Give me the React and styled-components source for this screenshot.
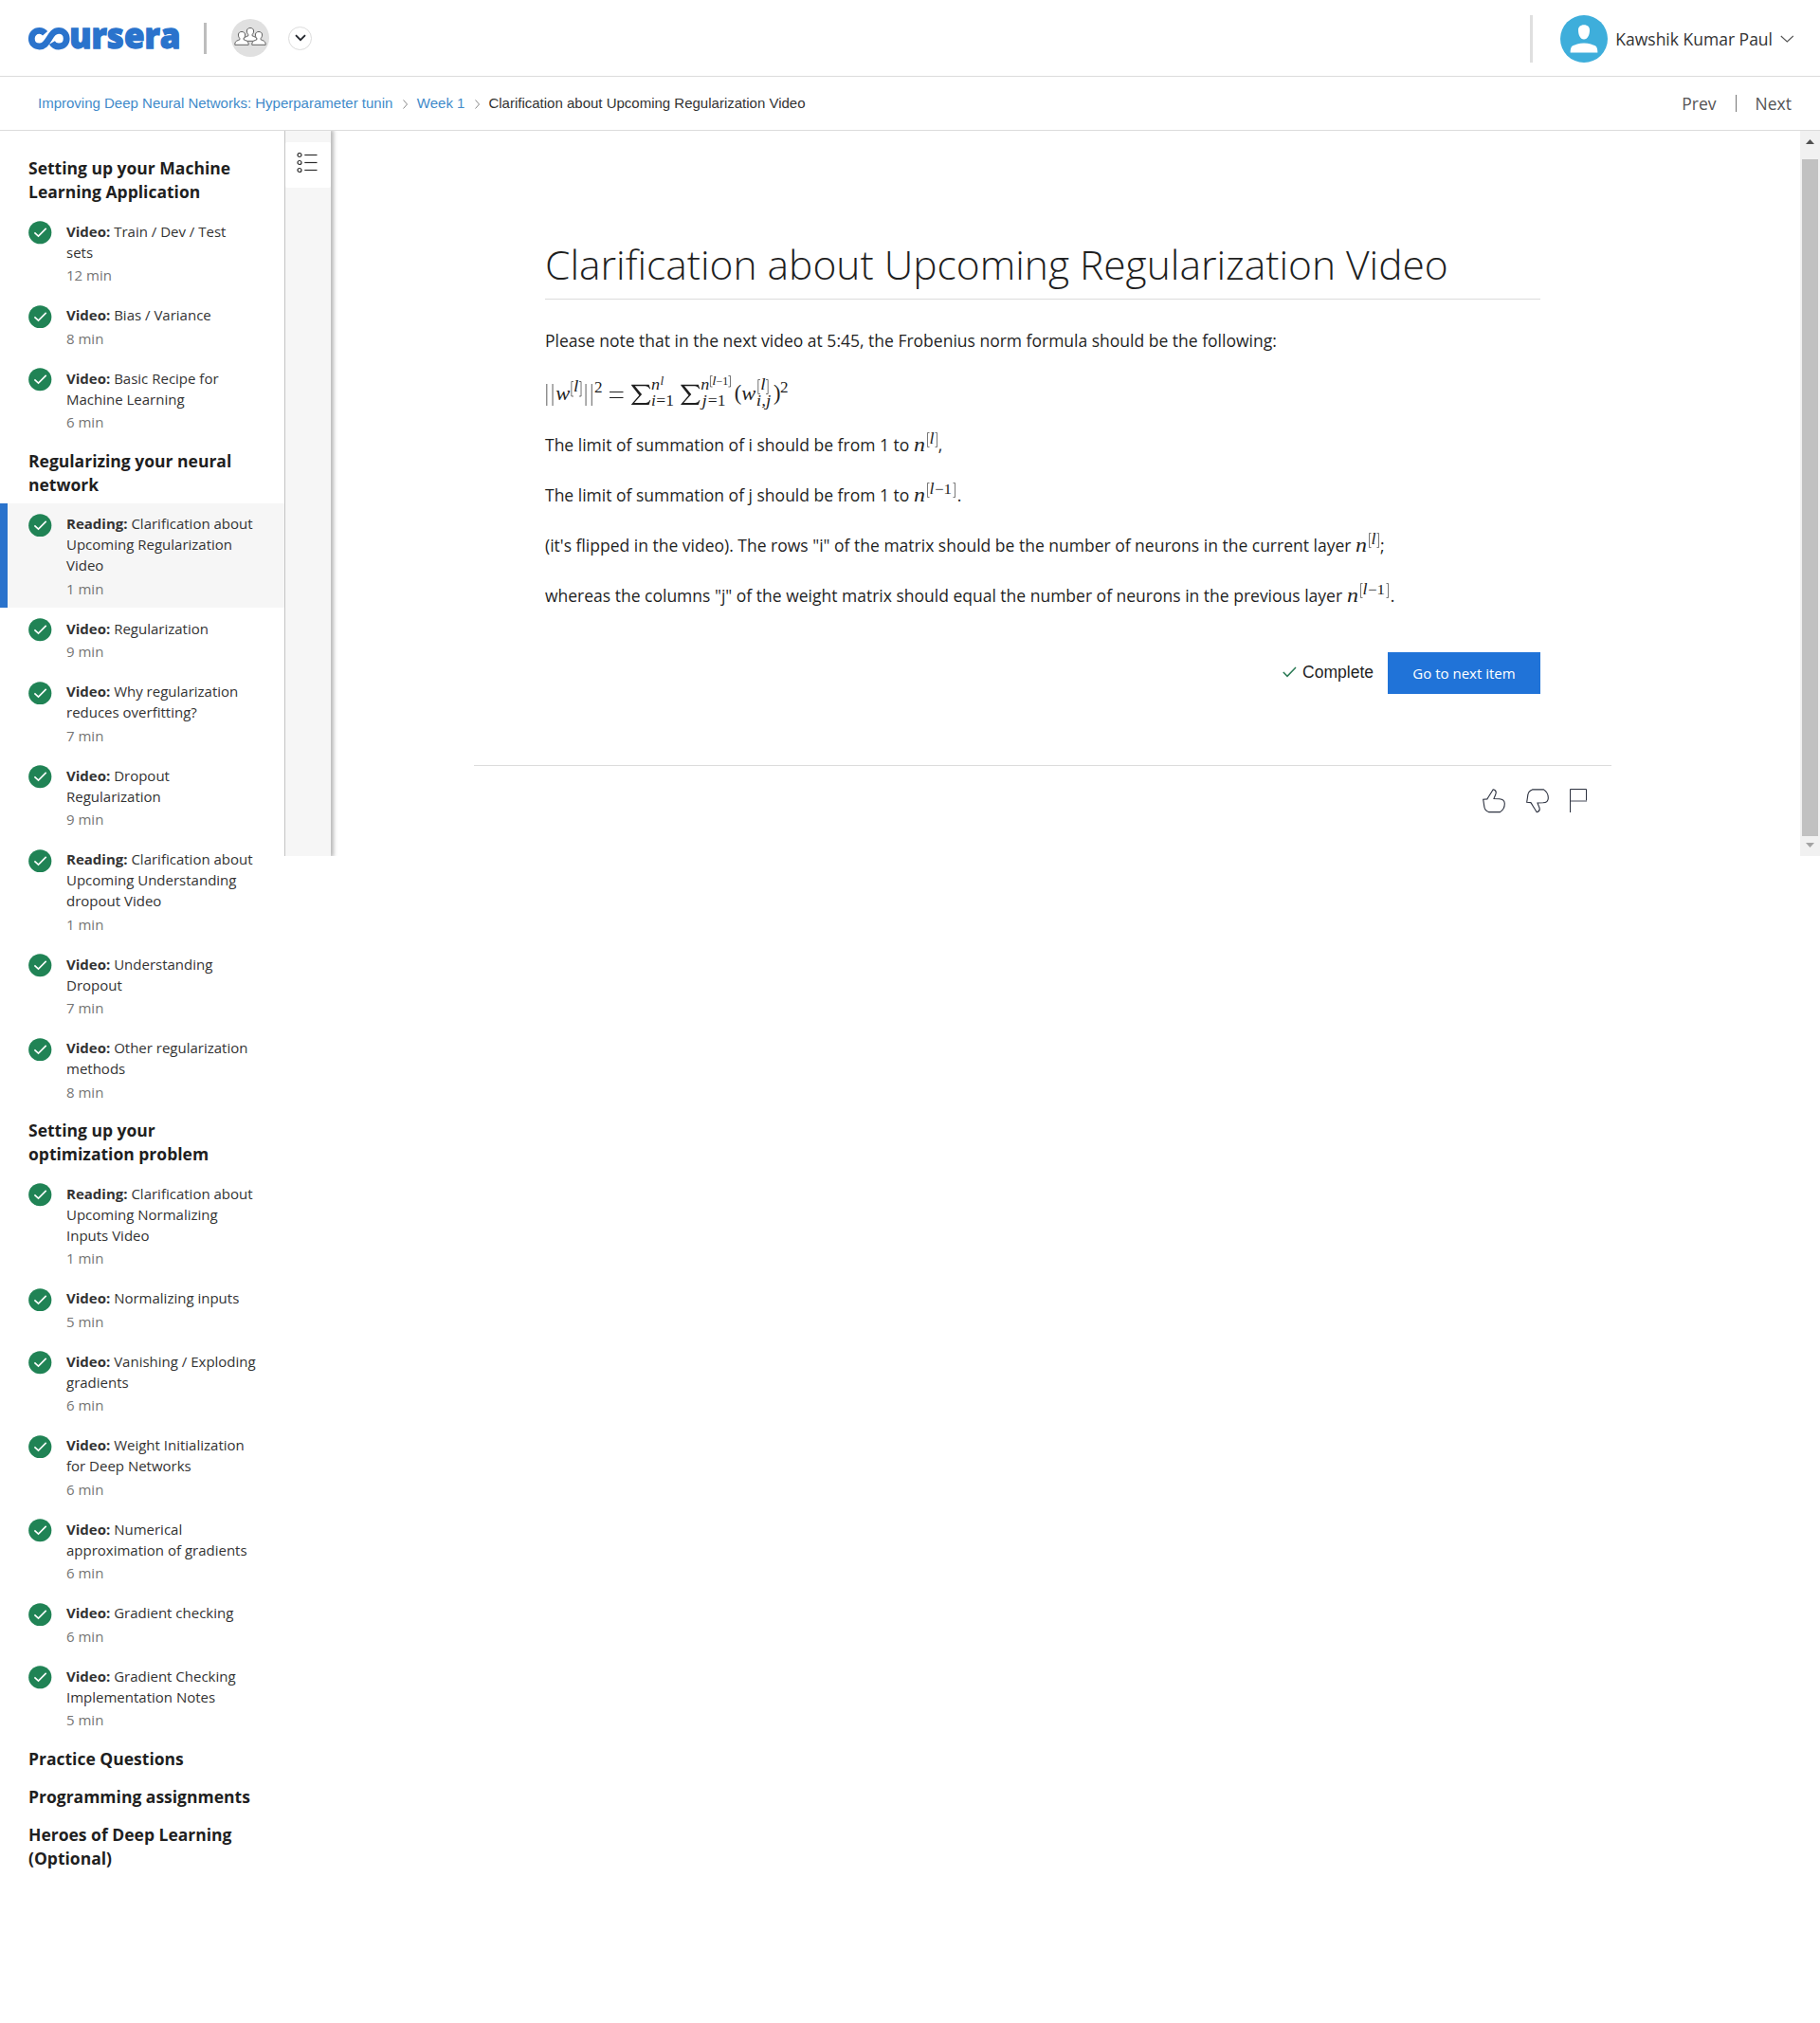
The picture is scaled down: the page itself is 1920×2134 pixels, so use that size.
import React from "react";
import styled, { createGlobalStyle } from "styled-components";

const GlobalStyle = createGlobalStyle`
  *, *::before, *::after { box-sizing: border-box; }
  body {
    margin: 0;
    background: #fff;
    color: #1f1f1f;
    font-family: "Open Sans", "Noto Sans", sans-serif;
    font-size: 17.5px;
  }
`;

const sections = [
  {
    title: "Setting up your Machine\nLearning Application",
    items: [
      { kind: "Video", name: "Train / Dev / Test\nsets", time: 12 },
      { kind: "Video", name: "Bias / Variance", time: 8 },
      { kind: "Video", name: "Basic Recipe for\nMachine Learning", time: 6 },
    ],
  },
  {
    title: "Regularizing your neural\nnetwork",
    items: [
      { kind: "Reading", name: "Clarification about\nUpcoming Regularization\nVideo", time: 1, active: true },
      { kind: "Video", name: "Regularization", time: 9 },
      { kind: "Video", name: "Why regularization\nreduces overfitting?", time: 7 },
      { kind: "Video", name: "Dropout\nRegularization", time: 9 },
      { kind: "Reading", name: "Clarification about\nUpcoming Understanding\ndropout Video", time: 1 },
      { kind: "Video", name: "Understanding\nDropout", time: 7 },
      { kind: "Video", name: "Other regularization\nmethods", time: 8 },
    ],
  },
  {
    title: "Setting up your\noptimization problem",
    items: [
      { kind: "Reading", name: "Clarification about\nUpcoming Normalizing\nInputs Video", time: 1 },
      { kind: "Video", name: "Normalizing inputs", time: 5 },
      { kind: "Video", name: "Vanishing / Exploding\ngradients", time: 6 },
      { kind: "Video", name: "Weight Initialization\nfor Deep Networks", time: 6 },
      { kind: "Video", name: "Numerical\napproximation of gradients", time: 6 },
      { kind: "Video", name: "Gradient checking", time: 6 },
      { kind: "Video", name: "Gradient Checking\nImplementation Notes", time: 5 },
    ],
  },
  { title: "Practice Questions", items: [] },
  { title: "Programming assignments", items: [] },
  { title: "Heroes of Deep Learning\n(Optional)", items: [] },
];

/* ---------- header ---------- */

const Header = styled.header`
  display: flex;
  align-items: center;
  height: 81px;
  padding: 0 27px 0 30px;
  border-bottom: 1px solid #dcdcdc;
`;

const Divider = styled.span`
  width: 3px;
  height: ${(p) => p.$height}px;
  background: ${(p) => p.$color};
`;

const GroupBadge = styled.span`
  display: flex;
  width: 40px;
  height: 40px;
  margin: 0 20px 0 26px;
  border-radius: 50%;
  background: #e0e0e0;
`;

const RoundButton = styled.button`
  display: flex;
  align-items: center;
  justify-content: center;
  width: 25px;
  height: 25px;
  padding: 0;
  border: 1px solid #dcdcdc;
  border-radius: 50%;
  background: #fff;
`;

const Account = styled.div`
  display: flex;
  align-items: center;
  margin: 2px 0 0 auto;
`;

const UserName = styled.span`
  margin: 0 8px 0 8px;
  color: #333;
  line-height: 24px;
`;

const LogoSvg = styled.svg`
  display: block;
  margin-right: 25px;
  overflow: visible;
  font-family: "Open Sans", sans-serif;
  font-size: 37px;
  font-weight: 800;
`;

const Icon = styled.svg`
  display: block;
  flex: none;
`;

const Avatar = styled(Icon)`
  margin-left: 29px;
`;

/* ---------- breadcrumb bar ---------- */

const SubHeader = styled.div`
  display: flex;
  align-items: center;
  justify-content: space-between;
  height: 57px;
  padding: 0 30px 0 40px;
  border-bottom: 1px solid #dcdcdc;
`;

const Crumbs = styled.nav`
  display: flex;
  align-items: center;
  color: #333;
  font: 15px/20px "Liberation Sans", Arial, sans-serif;
`;

const Crumb = styled.a`
  color: #428bca;
`;

const CrumbArrow = styled(Icon)`
  margin: 2px ${(p) => p.$right}px 0 ${(p) => p.$left}px;
`;

const Pager = styled.div`
  display: flex;
  align-items: center;
  color: #555;
  line-height: 24px;
`;

const PagerBar = styled.span`
  width: 1px;
  height: 18px;
  margin: 0 20px 0 20px;
  background: #777;
`;

/* ---------- page body ---------- */

const Body = styled.div`
  display: flex;
  align-items: flex-start;
`;

const Sidebar = styled.aside`
  width: 300px;
  padding-top: 26.5px;
`;

const Section = styled.section`
  padding: 0.625px 0 7.5px;
`;

const SectionTitle = styled.h2`
  margin: 0 0 6.9375px 30px;
  font-size: 17.5px;
  font-weight: 700;
  line-height: 25px;
  white-space: pre;
`;

const Item = styled.a`
  display: flex;
  padding: 11px 0 9.5px ${(p) => (p.$active ? 22 : 30)}px;
  border-left: ${(p) => (p.$active ? "8px solid #2a73cc" : "0")};
  background: ${(p) => (p.$active ? "#f6f6f6" : "transparent")};
`;

const ItemText = styled.div`
  margin: -0.375px 0 0 15.5px;
  color: #333;
  font-size: 15px;
  line-height: 22px;
`;

const Line = styled.div`
  white-space: nowrap;
`;

const Duration = styled.div`
  padding-top: 2.375px;
  color: #757575;
`;

const Panel = styled.div`
  display: flex;
  flex: 1;
  height: 765px;
  overflow: hidden;
`;

const Rail = styled.div`
  width: 49px;
  padding-top: 12px;
  border-left: 1px solid #c4c4c4;
  background: #f6f6f6;
  box-shadow: 2px 0 4px 1px rgba(0, 0, 0, 0.28);
`;

const RailTab = styled.div`
  display: flex;
  align-items: center;
  justify-content: center;
  height: 48px;
  padding: 0 3px 5px 0;
  border-radius: 2px;
  background: #fff;
`;

const Main = styled.main`
  flex: 1;
  padding: 0 199px 0 151px;
`;

const Article = styled.article`
  padding: 109px 75px 0 75px;
`;

const Title = styled.h1`
  height: 69px;
  margin: 0 0 31px;
  padding-top: 2px;
  border-bottom: 1px solid #dcdcdc;
  font-size: 42.5px;
  font-weight: 300;
  line-height: 60px;
`;

const Paragraph = styled.p`
  height: 25px;
  margin: 0 0 ${(p) => p.$gap ?? 28}px;
  line-height: 25px;
  white-space: nowrap;
`;

const MathSvg = styled.svg`
  display: block;
  overflow: visible;
  fill: #1f1f1f;
  font-family: "Liberation Serif", serif;
`;

const InlineMath = styled(MathSvg)`
  display: inline-block;
  height: 22px;
  vertical-align: -2px;
`;

const Formula = styled.div`
  height: 34px;
  margin-bottom: 25px;
`;

const Actions = styled.div`
  display: flex;
  justify-content: flex-end;
  margin-top: 48px;
`;

const Complete = styled.div`
  display: flex;
  align-items: center;
  height: 42px;
  margin-right: 15px;
  gap: 6px;
  font: 17.5px/24px "Liberation Sans", Arial, sans-serif;
`;

const NextButton = styled.button`
  width: 161px;
  height: 44px;
  padding: 0;
  border: 0;
  background: #2073d8;
  color: #fff;
  font: 500 15px "Open Sans", sans-serif;
`;

const Feedback = styled.footer`
  display: flex;
  margin-top: 75px;
  padding: 24px 24px 0 0;
  justify-content: flex-end;
  gap: 22px;
  border-top: 1px solid #dcdcdc;
`;

const Scrollbar = styled.div`
  display: flex;
  flex-direction: column;
  align-items: center;
  width: 21px;
  background: #f1f1f1;
`;

const Thumb = styled.div`
  width: 17px;
  height: 714px;
  background: #c1c1c1;
`;

const ScrollArrow = styled(Icon)`
  margin: ${(p) => p.$margin};
`;

/* ---------- drawings ---------- */

const Logo = () => (
  <LogoSvg width="160" height="60" viewBox="0 -19 160 60" role="img" aria-label="coursera">
    <path
      d="M17.6 6.3C15.8 4.2 14 3.4 11.6 3.4C6.6 3.4 3.3 7 3.3 11.7C3.3 16.6 6.8 20 11.6 20C16.4 20 18.6 16.9 21.5 12.2C24.6 7 27 3.4 32 3.4C36.8 3.4 40.2 7 40.2 11.7C40.2 16.6 36.8 20 32 20C28.6 20 26.3 18.5 24.9 16"
      fill="none"
      stroke="#2a73cc"
      strokeWidth="6.8"
    />
    <text
      x="43.2"
      y="22"
      textLength="117.3"
      lengthAdjust="spacingAndGlyphs"
      fill="#2a73cc"
      stroke="#2a73cc"
      strokeWidth="1.3"
    >
      ursera
    </text>
  </LogoSvg>
);

const PEOPLE = [
  { x: 20, y: 0 },
  { x: 11, y: 4 },
  { x: 29, y: 4 },
];

const People = () => (
  <Icon width="40" height="40" viewBox="0 0 40 40">
    {PEOPLE.map(({ x, y }) => (
      <g key={x} transform={`translate(${x} ${y})`} fill="#fff" stroke="#606060" strokeWidth="1">
        <path d="M-2.1 16.5C-3.6 14.800 -3.700 13.500 -3.500 12C-3.200 10.300 -1.800 9.500 0 9.500C1.800 9.500 3.200 10.300 3.500 12C3.700 13.500 3.600 14.800 2.100 16.500L2.100 17.800C4.200 18.700 7.200 19.300 7.200 22.200L7.200 23.300L-7.200 23.300L-7.200 22.200C-7.200 19.300 -4.200 18.700 -2.100 17.800Z" />
      </g>
    ))}
  </Icon>
);

const Check = () => (
  <Icon width="24.5" height="24.5" viewBox="0 0 24.5 24.5">
    <circle cx="12.25" cy="12.25" r="12.1" fill="#208355" />
    <path d="M6.400 12.300L10.500 16.100L18.700 7.900" fill="none" stroke="#fff" strokeWidth="1.6" />
  </Icon>
);

const Var = ({ x, y, size, w, children }) => (
  <text x={x} y={y} fontSize={size} fontStyle="italic" textLength={w} lengthAdjust="spacingAndGlyphs">
    {children}
  </text>
);

const Num = ({ x, y, size, w, children }) => (
  <text x={x} y={y} fontSize={size} textLength={w} lengthAdjust="spacingAndGlyphs">
    {children}
  </text>
);

const Bracket = ({ x, y, h, flip }) => (
  <path
    d={flip ? `M${x - 2} ${y}H${x}V${y + h}H${x - 2}` : `M${x + 2} ${y}H${x}V${y + h}H${x + 2}`}
    fill="none"
    stroke="#1f1f1f"
    strokeWidth="0.6"
  />
);

const LayerCount = ({ previous }) => (
  <InlineMath width={previous ? 46 : 26}>
    <Var x="0" y="19.500" size="21" w="12">n</Var>
    <Bracket x={14.500} y={0.500} h={15} />
    <Var x="16.500" y="11.500" size="16" w="5">l</Var>
    {previous && <Num x="22" y="11.500" size="15" w="18">−1</Num>}
    <Bracket x={previous ? 43.500 : 24.500} y={0.500} h={15} flip />
  </InlineMath>
);

const NormBars = ({ x }) => (
  <path d={`M${x} 8V31M${x + 5.800} 8V31`} stroke="#1f1f1f" strokeWidth="0.7" />
);

const Sum = ({ x }) => (
  <path
    d={`M${x} 8.700H${x + 17.300}L${x + 18.700} 13.300H${x + 18}C${x + 16.800} 10.500 ${x + 15} 10.200 ${x + 11.500} 10.200H${x + 3.500}L${x + 10.300} 19L${x + 2.800} 28H${x + 12}C${x + 15.500} 28 ${x + 17.200} 27.500 ${x + 18.200} 25H${x + 18.900}L${x + 17.300} 30H${x}V29.400L${x + 7.700} 20L${x} 9.500Z`}
  />
);

const Frobenius = () => (
  <MathSvg width="264" height="34" viewBox="0 0 246.4 34" preserveAspectRatio="none" role="img" aria-label="Frobenius norm">
    <NormBars x={1.700} />
    <Var x="10.500" y="24.700" size="21" w="14">w</Var>
    <Bracket x={26} y={5.500} h={15.500} />
    <Var x="28" y="16.500" size="16" w="5">l</Var>
    <Bracket x={35.500} y={5.500} h={15.500} flip />
    <NormBars x={40.200} />
    <Num x="48.500" y="17.500" size="16" w="8">2</Num>
    <path d="M63.500 16.500H77M63.500 22.500H77" stroke="#1f1f1f" strokeWidth="1" />
    <Sum x={85} />
    <Var x="104.500" y="14" size="16" w="8.500">n</Var>
    <Var x="113.300" y="9" size="12.500" w="3.500">l</Var>
    <Var x="104.500" y="31" size="16" w="4.500">i</Var>
    <Num x="109.500" y="31" size="16" w="17.500">=1</Num>
    <Sum x={133.700} />
    <Var x="153.200" y="14" size="16" w="8.500">n</Var>
    <Bracket x={162.800} y={-0.500} h={11.500} />
    <Var x="164.500" y="8.500" size="12" w="4">l</Var>
    <Num x="168.500" y="8.500" size="12" w="12">−1</Num>
    <Bracket x={182.500} y={-0.500} h={11.500} flip />
    <Var x="154.500" y="31" size="16" w="5">j</Var>
    <Num x="160.300" y="31" size="16" w="17.500">=1</Num>
    <Num x="186.500" y="25.500" size="23" w="7">(</Num>
    <Var x="193.500" y="24.700" size="21" w="14">w</Var>
    <Bracket x={209.800} y={3.500} h={15} />
    <Var x="212" y="14" size="16" w="5">l</Var>
    <Bracket x={219.500} y={3.500} h={15} flip />
    <Var x="208" y="31" size="16" w="14.500">i,j</Var>
    <Num x="225" y="25.500" size="23" w="7">)</Num>
    <Num x="231.500" y="17.500" size="16" w="8">2</Num>
  </MathSvg>
);

const THUMB =
  "M0.700 11.300L4.900 10.900C7 7.500 9 4.500 11.200 0.800C13.200 1.300 14.400 2.600 14.200 4.300C14 6.400 12.700 8.300 12 10.500L17.800 10.700C21 10.900 23.200 12.500 23.300 15.600C23.400 19.200 22 22.300 18.500 24.600L6.500 24.600C3.500 23.400 2.200 22 1.900 19.300Z";

const ThumbUp = () => (
  <Icon width="24" height="26" viewBox="0 0 24 26" fill="none" stroke="#2d3240" strokeWidth="1.100">
    <path d={THUMB} />
  </Icon>
);

const ThumbDown = () => (
  <Icon width="24" height="26" viewBox="0 0 24 26" fill="none" stroke="#2d3240" strokeWidth="1.100">
    <path d={THUMB} transform="matrix(1 0 0 -1 0 25.500)" />
  </Icon>
);

const Flag = () => (
  <Icon width="20" height="26" viewBox="0 0 20 26" fill="none" stroke="#2d3240">
    <path d="M0.500 25V0.500H17.500V13" />
    <path d="M1 13H18" stroke="#8b8e96" strokeWidth="1.600" />
  </Icon>
);

const SidebarItem = ({ kind, name, time, active }) => {
  const [first, ...rest] = name.split("\n");
  return (
    <Item $active={active}>
      <Check />
      <ItemText>
        <Line>
          <strong>{kind}:</strong> {first}
        </Line>
        {rest.map((line) => (
          <Line key={line}>{line}</Line>
        ))}
        <Duration>{time} min</Duration>
      </ItemText>
    </Item>
  );
};

export default function App() {
  return (
    <>
      <GlobalStyle />
      <Header>
        <Logo />
        <Divider $height={33} $color="#bdbdbd" />
        <GroupBadge>
          <People />
        </GroupBadge>
        <RoundButton aria-label="Switch program">
          <Icon width="12" height="8" viewBox="0 0 12 8" fill="none" stroke="#22252c" strokeWidth="1.800">
            <path d="M1 1.200L6 6.200L11 1.200" />
          </Icon>
        </RoundButton>
        <Account>
          <Divider $height={50} $color="#dfdfdf" />
          <Avatar width="50" height="50" viewBox="0 0 50 50">
            <circle cx="25" cy="25" r="25" fill="#3eaedb" />
            <path
              fill="#fff"
              d="M25 10.300C28.800 10.300 31.300 12.500 31 16.300C30.800 21 29 25.500 25 25.500C21 25.500 19.200 21 19 16.300C18.700 12.500 21.200 10.300 25 10.300ZM10.600 39.600C10.700 36.500 11 33.500 13 32.300C15.500 31.200 19.500 29.500 25 29.500C30.500 29.500 34.500 31.200 37 32.300C39 33.500 39.300 36.500 39.400 39.600Z"
            />
          </Avatar>
          <UserName>Kawshik Kumar Paul</UserName>
          <Icon width="15" height="8" viewBox="0 0 15 8" fill="none" stroke="#555" strokeWidth="1.100">
            <path d="M0.800 1L7.300 7L13.800 1" />
          </Icon>
        </Account>
      </Header>

      <SubHeader>
        <Crumbs>
          <Crumb>Improving Deep Neural Networks: Hyperparameter tunin</Crumb>
          <CrumbArrow $left={11} $right={9.5} width="5" height="10" viewBox="0 0 5 10" fill="none" stroke="#888">
            <path d="M0.500 0.500L4.500 5L0.500 9.500" />
          </CrumbArrow>
          <Crumb>Week 1</Crumb>
          <CrumbArrow $left={10.5} $right={9.5} width="5" height="10" viewBox="0 0 5 10" fill="none" stroke="#888">
            <path d="M0.500 0.500L4.500 5L0.500 9.500" />
          </CrumbArrow>
          <span>Clarification about Upcoming Regularization Video</span>
        </Crumbs>
        <Pager>
          <span>Prev</span>
          <PagerBar />
          <span>Next</span>
        </Pager>
      </SubHeader>

      <Body>
        <Sidebar>
          {sections.map((section) => (
            <Section key={section.title}>
              <SectionTitle>{section.title}</SectionTitle>
              {section.items.map((item) => (
                <SidebarItem key={item.name} {...item} />
              ))}
            </Section>
          ))}
        </Sidebar>

        <Panel>
          <Rail>
            <RailTab>
              <Icon width="22" height="22" viewBox="0 0 22 22" fill="none" stroke="#2d2d2d" strokeWidth="1.200">
                {[2.5, 10.5, 18.5].map((y) => (
                  <g key={y}>
                    <circle cx="3" cy={y} r="2" />
                    <path d={`M8.300 ${y}H21.500`} />
                  </g>
                ))}
              </Icon>
            </RailTab>
          </Rail>
          <Main>
            <Article>
              <Title>Clarification about Upcoming Regularization Video</Title>
              <Paragraph $gap={25}>
                Please note that in the next video at 5:45, the Frobenius norm formula should be the following:
              </Paragraph>
              <Formula>
                <Frobenius />
              </Formula>
              <Paragraph>
                The limit of summation of i should be from 1 to <LayerCount />,
              </Paragraph>
              <Paragraph>
                The limit of summation of j should be from 1 to <LayerCount previous />.
              </Paragraph>
              <Paragraph>
                (it's flipped in the video). The rows "i" of the matrix should be the number of neurons in the current
                layer <LayerCount />;
              </Paragraph>
              <Paragraph>
                whereas the columns "j" of the weight matrix should equal the number of neurons in the previous layer{" "}
                <LayerCount previous />.
              </Paragraph>
              <Actions>
                <Complete>
                  <Icon width="15" height="12" viewBox="0 0 15 12" fill="none" stroke="#2b7a55" strokeWidth="1.500">
                    <path d="M0.800 6L5 10.300L14 1" />
                  </Icon>
                  Complete
                </Complete>
                <NextButton>Go to next item</NextButton>
              </Actions>
            </Article>
            <Feedback>
              <ThumbUp />
              <ThumbDown />
              <Flag />
            </Feedback>
          </Main>
          <Scrollbar>
            <ScrollArrow $margin="9px 0 16px" width="9" height="5" viewBox="0 0 9 5" fill="#505050">
              <path d="M0 5L4.500 0L9 5Z" />
            </ScrollArrow>
            <Thumb />
            <ScrollArrow $margin="7px 0 0" width="9" height="5" viewBox="0 0 9 5" fill="#a3a3a3">
              <path d="M0 0L4.500 5L9 0Z" />
            </ScrollArrow>
          </Scrollbar>
        </Panel>
      </Body>
    </>
  );
}
